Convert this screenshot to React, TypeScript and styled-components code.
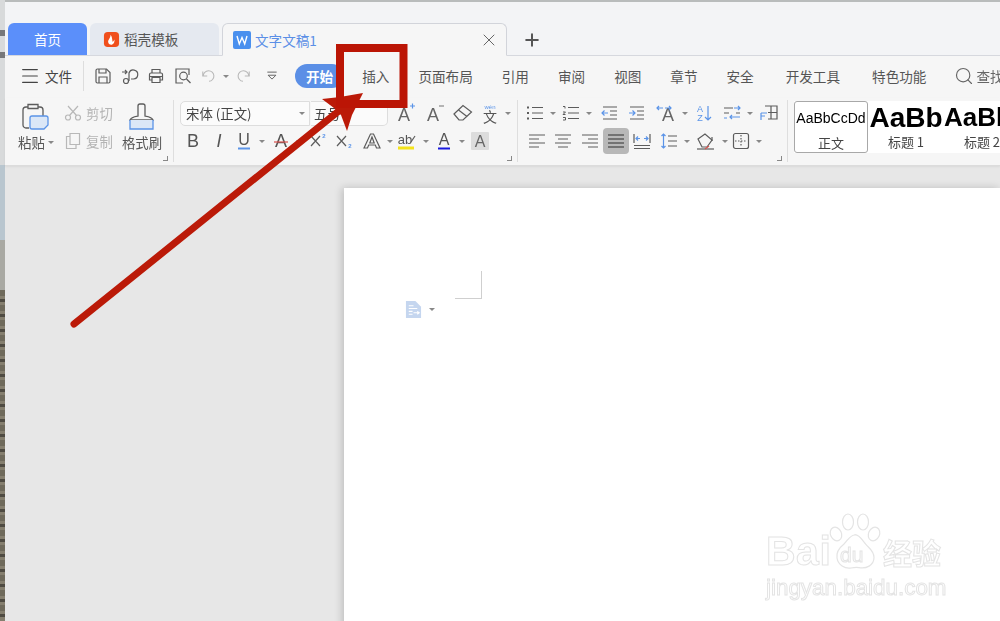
import React from "react";
import styled, { createGlobalStyle } from "styled-components";
import { Menu, Search, X, Plus } from "lucide-react";

const GlobalStyle = createGlobalStyle`
  html, body {
    margin: 0;
    padding: 0;
    background: #e7e7e7;
    overflow: hidden;
  }
  * { box-sizing: border-box; }
`;

const Root = styled.div`
  position: relative;
  width: 1000px;
  height: 621px;
  overflow: hidden;
  display: flex;
  font-family: "Noto Sans CJK SC", "Liberation Sans", sans-serif;
  color: #555;
  filter: blur(0.35px);
`;

// the bit of desktop wallpaper left of the window, rocks at the bottom
const rockTones = ["#6f6a5c", "#a39d8e", "#4f4b42", "#bdb6a8", "#857f6f", "#d0cabd", "#5d594e", "#958f80", "#77786f", "#aaa69a"];
const rockStops = Array.from({ length: 110 }, (_, i) => {
  const tone = rockTones[(i * i * 7 + i * 3) % rockTones.length];
  const start = 290 + i * 3;
  return `${tone} ${start}px ${start + 3}px`;
}).join(", ");

const DesktopStrip = styled.div`
  width: 5px;
  flex: none;
  background: linear-gradient(180deg, #d8dadb 0 30px, #77787a 30px 36px, #d8dadb 36px 52px, #77787a 52px 58px, #d8dadb 58px 165px, #b9c6cf 165px 240px, #a9a9a3 240px 290px, ${rockStops});
`;

const Win = styled.div`
  flex: 1;
  display: flex;
  flex-direction: column;
  min-width: 0;
  border-top: 2px solid #b9bcbc;
`;

const TitleBar = styled.div`
  height: 54px;
  flex: none;
  display: flex;
  align-items: flex-end;
  gap: 3px;
  padding-left: 3px;
  background: #f3f4f6;
  border-bottom: 1px solid #d6d8de;
`;

const Tab = styled.div<{ $w: number; $bg: string; $color: string; $active?: boolean }>`
  width: ${(p) => p.$w}px;
  height: ${(p) => (p.$active ? 33 : 32)}px;
  margin-bottom: ${(p) => (p.$active ? -1 : 0)}px;
  display: flex;
  align-items: center;
  gap: 4px;
  border-radius: 6px 6px 0 0;
  background: ${(p) => p.$bg};
  color: ${(p) => p.$color};
  font-size: 13.6px;
  border: ${(p) => (p.$active ? "1px solid #d2d4da" : "none")};
  border-bottom: ${(p) => (p.$active ? "1px solid #f6f6f6" : "none")};
  padding-left: ${(p) => (p.$active ? 10 : 13)}px;
`;

const HomeLabel = styled.span`
  width: 100%;
  text-align: center;
  padding-right: 13px;
`;

const Grow = styled.span`
  flex: 1;
`;

const CloseBtn = styled.span`
  display: flex;
  color: #666;
  margin-right: 7px;
`;

const AddTab = styled.div`
  display: flex;
  margin: 0 0 5px 12px;
  color: #555;
`;

const MenuRow = styled.div`
  height: 42px;
  flex: none;
  display: flex;
  align-items: center;
  padding-bottom: 2px;
  background: #f6f6f6;
  font-size: 13.6px;
`;

const Hamburger = styled.div`
  display: flex;
  flex: none;
  align-items: center;
  gap: 4px;
  padding-left: 14px;
  width: 78px;
  color: #444;
`;

const QuickBar = styled.div`
  display: flex;
  flex: none;
  align-items: center;
  width: 212px;
  height: 30px;
  border-left: 1px solid #ddd;
  padding-left: 5px;
`;

const MenuTabs = styled.div`
  display: flex;
  flex: none;
  align-items: center;
  gap: 7px;
`;

const MenuTab = styled.div<{ $active?: boolean; $far?: boolean }>`
  padding: 0 11px;
  height: 24px;
  line-height: 24px;
  white-space: nowrap;
  font-size: 13.6px;
  border-radius: 12px;
  margin-left: ${(p) => (p.$far ? 3 : 0)}px;
  background: ${(p) => (p.$active ? "#5b8fe6" : "transparent")};
  color: ${(p) => (p.$active ? "#fff" : "#555")};
  font-weight: ${(p) => (p.$active ? 600 : 400)};
`;

const Finder = styled.div`
  display: flex;
  flex: none;
  align-items: center;
  gap: 2px;
  margin-left: 17px;
  white-space: nowrap;
  font-size: 13.6px;
  color: #666;
`;

const Ribbon = styled.div`
  height: 68px;
  flex: none;
  display: flex;
  background: #f6f6f6;
  border-bottom: 1px solid #dcdcdc;
  box-shadow: 0 1px 2px rgba(0, 0, 0, 0.06);
  position: relative;
`;

const Group = styled.div<{ $w: number; $pad: number }>`
  position: relative;
  flex: none;
  width: ${(p) => p.$w}px;
  padding-left: ${(p) => p.$pad}px;
  margin: 2px 0 3px;
  border-right: 1px solid #dedede;
`;

const Launcher = styled.span`
  position: absolute;
  right: 5px;
  bottom: 1px;
  width: 5px;
  height: 5px;
  border-right: 1px solid #888;
  border-bottom: 1px solid #888;
`;

const ClipGrid = styled.div`
  display: flex;
  padding-left: 8px;
`;

const BigTool = styled.div<{ $w: number }>`
  width: ${(p) => p.$w}px;
  flex: none;
  display: flex;
  flex-direction: column;
  align-items: center;
  font-size: 13.4px;
  color: #555;
  white-space: nowrap;
  padding-top: 3px;
  gap: 1px;
`;

const BigLabel = styled.div`
  display: flex;
  align-items: center;
  gap: 3px;
  height: 20px;
`;

const SmallTools = styled.div`
  width: 57px;
  flex: none;
  margin-left: 5px;
  display: flex;
  flex-direction: column;
  gap: 8px;
  padding-top: 3px;
`;

const SmallTool = styled.div`
  display: flex;
  align-items: center;
  gap: 4px;
  height: 20px;
  font-size: 13.4px;
  color: #b4b4b4;
`;

const ToolRow = styled.div<{ $top?: number }>`
  display: flex;
  align-items: center;
  height: 26px;
  margin-top: ${(p) => p.$top ?? 0}px;
`;

const Tool = styled.div<{ $w: number; $on?: boolean }>`
  width: ${(p) => p.$w}px;
  height: 26px;
  flex: none;
  display: flex;
  align-items: center;
  justify-content: center;
  gap: 6px;
  border-radius: 4px;
  background: ${(p) => (p.$on ? "#b8b8b8" : "transparent")};
`;

const Caret = styled.span`
  width: 0;
  height: 0;
  flex: none;
  border-left: 3px solid transparent;
  border-right: 3px solid transparent;
  border-top: 3px solid #888;
`;

const FontBox = styled.div<{ $w: number; $left?: boolean }>`
  width: ${(p) => p.$w}px;
  height: 25px;
  flex: none;
  display: flex;
  align-items: center;
  justify-content: space-between;
  padding: 0 4px 0 ${(p) => (p.$left ? 5 : 3)}px;
  font-size: 13.4px;
  color: #444;
  background: #fbfbfb;
  border: 1px solid #dddddd;
  border-radius: ${(p) => (p.$left ? "5px 0 0 5px" : "0 5px 5px 0")};
  border-left-width: ${(p) => (p.$left ? 1 : 0)}px;
  margin-right: ${(p) => (p.$left ? 1 : 0)}px;
`;

const Gallery = styled.div`
  display: flex;
  flex: none;
  height: 52px;
  margin: 3px 0 0 6px;
  background: #fff;
  width: 206px;
  overflow: hidden;
`;

const StyleCard = styled.div<{ $w: number; $on?: boolean }>`
  width: ${(p) => p.$w}px;
  flex: none;
  display: flex;
  flex-direction: column;
  align-items: center;
  justify-content: space-between;
  overflow: ${(p) => (p.$on ? "hidden" : "visible")};
  border: ${(p) => (p.$on ? "1.5px solid #a8a8a8" : "none")};
  border-radius: 3px;
  padding: ${(p) => (p.$on ? "0 0 2px" : "0 0 3px")};
  white-space: nowrap;
`;

const Sample = styled.div<{ $size: number; $bold?: boolean; $start?: boolean }>`
  height: 33px;
  line-height: 33px;
  font-family: "Liberation Sans", sans-serif;
  font-size: ${(p) => p.$size}px;
  font-weight: ${(p) => (p.$bold ? 700 : 400)};
  color: #000;
  align-self: ${(p) => (p.$start ? "flex-start" : "center")};
`;

const StyleName = styled.div`
  font-size: 13px;
  line-height: 16px;
  color: #444;
`;

const Canvas = styled.div`
  flex: 1;
  background: #e7e7e7;
  padding: 22px 0 0 339px;
  min-height: 0;
`;

const Sheet = styled.div`
  height: 500px;
  background: #fff;
  box-shadow: -2px 0 8px rgba(0, 0, 0, 0.18);
  padding: 83px 0 0 61px;
`;

const MarginMark = styled.div`
  width: 27px;
  height: 28px;
  margin-left: 50px;
  border-right: 1px solid #cfcfcf;
  border-bottom: 1px solid #cfcfcf;
`;

const PasteMark = styled.div`
  display: flex;
  align-items: center;
  gap: 7px;
  margin-top: 2px;
`;

const Watermark = styled.div`
  position: absolute;
  left: 766px;
  top: 513px;
  width: 190px;
  color: #fff;
  -webkit-text-stroke: 1px #e4e4e4;
  font-family: "Liberation Sans", sans-serif;
`;

const MarkLine = styled.div`
  display: flex;
  align-items: flex-end;
  height: 58px;
`;

const MarkBai = styled.span`
  font-size: 41px;
  line-height: 40px;
  font-weight: 700;
  letter-spacing: 0.5px;
  flex: none;
  width: 61px;
`;

const MarkPaw = styled.div`
  position: relative;
  width: 56px;
  height: 58px;
  flex: none;
`;

const MarkDu = styled.span`
  position: absolute;
  left: 13px;
  bottom: 6px;
  font-size: 21px;
  line-height: 21px;
  color: #fff;
`;

const MarkCn = styled.span`
  font-family: "Noto Sans CJK SC", sans-serif;
  font-size: 29px;
  line-height: 38px;
  font-weight: 700;
  flex: none;
`;

const MarkUrl = styled.div`
  font-size: 22.4px;
  line-height: 26px;
  margin-top: 4px;
  white-space: nowrap;
`;

const Annotation = styled.svg`
  position: absolute;
  inset: 0;
  width: 1000px;
  height: 621px;
  pointer-events: none;
`;

const G = styled.svg<{ $s?: number }>`
  width: ${(p) => p.$s ?? 18}px;
  height: ${(p) => p.$s ?? 18}px;
  flex: none;
  fill: none;
  stroke: #5c5c5c;
  stroke-width: 1.2;
  display: block;
  overflow: visible;
`;

const Faded = styled(G)`
  stroke: #b8b8b8;
`;

const Txt = ({ x, y, s, c, b, i, children }: { x: number; y: number; s: number; c?: string; b?: boolean; i?: boolean; children: React.ReactNode }) => (
  <text x={x} y={y} fontSize={s} fill={c ?? "#555"} stroke="none" fontFamily="Liberation Sans, Noto Sans CJK SC, sans-serif" fontWeight={b ? 700 : 400} fontStyle={i ? "italic" : "normal"} textAnchor="middle">
    {children}
  </text>
);

const BLUE = "#5b94e8";

const SaveIcon = () => (
  <G viewBox="0 0 18 18"><path d="M2 3.5A1.5 1.5 0 0 1 3.5 2h9L16 5.500V14.500A1.500 1.500 0 0 1 14.500 16h-11A1.500 1.500 0 0 1 2 14.500Z" /><path d="M5 2v4h7V2M5 16v-6h8v6" /></G>
);
const ShareIcon = () => (
  <G viewBox="0 0 18 18"><path d="M1 5h5M4 3l2 2-2 2" /><path d="M8 14V6a4.500 4.500 0 1 1 4.500 6H10" /><circle cx="5" cy="14" r="2.500" /></G>
);
const PrintIcon = () => (
  <G viewBox="0 0 18 18"><path d="M5 6V2.500h8V6M5 13H2.500V7.500A1.500 1.500 0 0 1 4 6h10a1.500 1.500 0 0 1 1.500 1.500V13H13" /><path d="M5 10.500h8V15.500H5ZM2.500 9.500h13" /></G>
);
const PreviewIcon = () => (
  <G viewBox="0 0 18 18"><path d="M15 8V2H2v14h7" /><circle cx="9.500" cy="9" r="3.800" /><path d="M12.500 12l4 4" /></G>
);
const UndoIcon = ({ flip }: { flip?: boolean }) => (
  <Faded viewBox="0 0 18 18" $s={16} style={flip ? { transform: "scaleX(-1)" } : undefined}>
    <path d="M2 4v5h5" /><path d="M2.500 9A6 6 0 1 1 9 15" />
  </Faded>
);
const MoreIcon = () => (
  <G viewBox="0 0 18 18" $s={14}><path d="M3 4h12M4 8l5 5 5-5z" /></G>
);

const PasteIcon = () => (
  <G viewBox="0 0 28 28" $s={28}>
    <path d="M7 25H4A3 3 0 0 1 1 22V7A3 3 0 0 1 4 4h14a3 3 0 0 1 3 3v6" strokeWidth={1.300} />
    <path d="M6 1.500h10v4H6Z" strokeWidth={1.300} fill="#f6f6f6" />
    <path d="M10 13h14a2 2 0 0 1 2 2v7l-4 4H10a2 2 0 0 1-2-2v-9a2 2 0 0 1 2-2Z" fill="#dbe7f7" stroke={BLUE} strokeWidth={1.300} />
  </G>
);
const BrushIcon = () => (
  <G viewBox="0 0 28 28" $s={28}>
    <path d="M10 13V3a2 2 0 0 1 2-2h3a2 2 0 0 1 2 2v10c3 .5 7 1 8 4H2c1-3 5-3.500 8-4Z" strokeWidth={1.300} />
    <path d="M2 17h23v9H2Z" fill="#dbe7f7" stroke="none" />
    <path d="M2 17v9h23v-9" stroke={BLUE} strokeWidth={1.300} />
  </G>
);
const CutIcon = () => (
  <Faded viewBox="0 0 18 18"><circle cx="4" cy="13.500" r="2.500" /><circle cx="14" cy="13.500" r="2.500" /><path d="M5.500 11.500L14 2M12.500 11.500L4 2" /></Faded>
);
const CopyIcon = () => (
  <Faded viewBox="0 0 18 18"><path d="M6 1.500h9.500v11H6Z" /><path d="M6 4.500H2.500v12h9.500v-4" /></Faded>
);

const Letter = ({ t, c, b, i, line, strike }: { t: string; c?: string; b?: boolean; i?: boolean; line?: string; strike?: string }) => (
  <G viewBox="0 0 18 18">
    <Txt x={9} y={line ? 13 : 15} s={line ? 16 : 18} c={c} b={b} i={i}>{t}</Txt>
    {line && <path d="M3 16.500h12" stroke={line} strokeWidth={2} />}
    {strike && <path d="M2 10h14" stroke={strike} strokeWidth={1.200} />}
  </G>
);
const Grow2 = ({ up }: { up?: boolean }) => (
  <G viewBox="0 0 20 20" $s={20}>
    <Txt x={9} y={18} s={18} c="#666">A</Txt>
    {up ? <path d="M15 3h5M17.500 0.500v5" stroke={BLUE} /> : <path d="M15 3h5" stroke="#888" />}
  </G>
);
const EraserIcon = () => (
  <G viewBox="0 0 20 20" $s={20}><path d="M1 11L10 2.500 18.500 9 10 17H6Z" /><path d="M5.500 7L14 13.500" /></G>
);
const PinyinIcon = () => (
  <G viewBox="0 0 18 18"><Txt x={9} y={5} s={6} c={BLUE}>wén</Txt><Txt x={9} y={18} s={14} c="#555">文</Txt></G>
);
const SuperIcon = ({ low }: { low?: boolean }) => (
  <G viewBox="0 0 18 18">
    <path d="M2 4l9 10M11 4l-9 10" />
    <Txt x={15} y={low ? 16 : 6} s={6} c={BLUE} b>2</Txt>
  </G>
);
const OutlineA = () => (
  <G viewBox="0 0 18 18"><path d="M1 16L7.500 2h3L17 16h-3.500l-1.200-3H5.700l-1.200 3Z" /><path d="M9 5l-2.200 6h4.400Z" /></G>
);
const HighlightIcon = () => (
  <G viewBox="0 0 20 20" $s={20}>
    <Txt x={8} y={13} s={13} c="#555">ab</Txt>
    <path d="M14 11l4-6" />
    <path d="M1 17h16" stroke="#f4e31b" strokeWidth={3} />
  </G>
);
const ShadeA = () => (
  <G viewBox="0 0 18 18"><rect x="0" y="0" width="18" height="18" fill="#dcdcdc" stroke="none" rx="1" /><Txt x={9} y={15} s={16} c="#666">A</Txt></G>
);

const ListIcon = ({ num }: { num?: boolean }) => (
  <G viewBox="0 0 18 18">
    <path d="M6 3.500h11M6 9h11M6 14.500h11" />
    <path d={num ? "M1 2.500h2v2M1 8h2.500L1 10.500h2.500M1 13.500h2.500v2.500H1" : "M1 3.500h2M1 9h2M1 14.500h2"} strokeWidth={num ? 1 : 2} />
  </G>
);
const IndentIcon = ({ rev }: { rev?: boolean }) => (
  <G viewBox="0 0 18 18">
    <path d="M2 3h14M9 7h7M9 11h7M2 15h14" />
    <path d={rev ? "M7 9H1M3.500 6.500L1 9l2.500 2.500" : "M1 9h6M4.500 6.500L7 9l-2.500 2.500"} stroke={BLUE} />
  </G>
);
const DirIcon = () => (
  <G viewBox="0 0 20 20" $s={20}>
    <Txt x={12} y={18} s={18} c="#666">A</Txt>
    <path d="M1 5h6M3 3L1 5l2 2M9 5h6M13 3l2 2-2 2" stroke={BLUE} />
  </G>
);
const SortIcon = () => (
  <G viewBox="0 0 18 18">
    <Txt x={5} y={8} s={9} c={BLUE}>A</Txt>
    <Txt x={5} y={17} s={9} c={BLUE}>Z</Txt>
    <path d="M13 2v14M10 13l3 3 3-3" stroke={BLUE} />
  </G>
);
const SwapIcon = () => (
  <G viewBox="0 0 18 18">
    <path d="M1 4h9M1 9h5M13 9h4" />
    <path d="M11 4h6M15 2l2 2-2 2M17 13H7M9 11l-2 2 2 2M1 14h3" stroke={BLUE} />
  </G>
);
const TableSplit = () => (
  <G viewBox="0 0 18 18"><path d="M5 2h12v13H8M11 2v13M8 8.500h9" /><path d="M1 9h6M1 9v7M1 12h4" stroke={BLUE} /></G>
);
const AlignIcon = ({ kind }: { kind: "l" | "c" | "r" | "j" }) => {
  const paths = {
    l: "M1 3h16M1 7h10M1 11h16M1 15h10",
    c: "M1 3h16M4 7h10M1 11h16M4 15h10",
    r: "M1 3h16M7 7h10M1 11h16M7 15h10",
    j: "M1 3h16M1 7h16M1 11h16M1 15h16",
  };
  return <G viewBox="0 0 18 18"><path d={paths[kind]} strokeWidth={kind === "j" ? 1.5 : 1.2} /></G>;
};
const DistIcon = () => (
  <G viewBox="0 0 18 18">
    <path d="M1 2v9M17 2v9M1 13.500h16M1 16.500h16" />
    <path d="M3 6.500h4M5 4.500l-2 2 2 2M11 6.500h4M13 4.500l2 2-2 2" stroke={BLUE} />
  </G>
);
const SpacingIcon = () => (
  <G viewBox="0 0 18 18">
    <path d="M8 4h9M8 9h9M8 14h9" />
    <path d="M3.500 2v14M1.500 4l2-2 2 2M1.500 14l2 2 2-2" stroke={BLUE} />
  </G>
);
const FillIcon = () => (
  <G viewBox="0 0 20 20" $s={20}>
    <path d="M2 8l7-5 7 6-5 7H6Z" />
    <path d="M16 6v4" />
    <path d="M1 18h17" />
    <path d="M9 18l4-3" stroke="#d9534f" />
  </G>
);
const BorderIcon = () => (
  <G viewBox="0 0 18 18"><rect x="1.500" y="1.500" width="15" height="15" rx="2" /><path d="M9 3v12M3 9h12" strokeDasharray="1.500 1.500" /></G>
);

const FlameLogo = () => (
  <G viewBox="0 0 16 18" $s={17}>
    <rect x="0" y="1" width="16" height="16" rx="4" fill="#f04f1c" stroke="none" />
    <path d="M7 4C7 8 4 9 4.500 12c.4 2 2 2.600 3 2.600 2.500 0 4-2.600 3.600-5.600-.6 1.400-1.200 2-2 2.300C8.800 9 8.600 6 7 4Z" fill="#fff" stroke="none" />
  </G>
);
const WLogo = () => (
  <G viewBox="0 0 18 18" $s={18}>
    <rect x="0" y="0" width="18" height="18" rx="2" fill="#4a90ee" stroke="none" />
    <path d="M4 5l2.300 8L9 6.500l2.700 6.500L14 5" stroke="#fff" strokeWidth={1.400} />
  </G>
);
const DocMark = () => (
  <G viewBox="0 0 16 18" $s={17}>
    <path d="M0 0h10l6 6v12H0Z" fill="#c5d6ef" stroke="none" />
    <path d="M3 5h5M3 8h9M3 11h4M3 14h4M8 12.500h6M12 11l2 1.500-2 1.500" stroke="#fff" />
  </G>
);

const tabNames = ["插入", "页面布局", "引用", "审阅", "视图", "章节", "安全"];

export default function App() {
  return (
    <Root>
      <GlobalStyle />
      <DesktopStrip />
      <Win>
        <TitleBar>
          <Tab $w={79} $bg="#5b8ffa" $color="#fff"><HomeLabel>首页</HomeLabel></Tab>
          <Tab $w={129} $bg="#e5e9f0" $color="#555"><FlameLogo />稻壳模板</Tab>
          <Tab $w={285} $bg="#f6f6f6" $color="#5b8fe6" $active>
            <WLogo />文字文稿1<Grow />
            <CloseBtn><X size={20} strokeWidth={1.2} /></CloseBtn>
          </Tab>
          <AddTab><Plus size={20} strokeWidth={2.400} /></AddTab>
        </TitleBar>

        <MenuRow>
          <Hamburger><Menu size={22} strokeWidth={1.3} />文件</Hamburger>
          <QuickBar>
            <Tool $w={27}><SaveIcon /></Tool>
            <Tool $w={27}><ShareIcon /></Tool>
            <Tool $w={25}><PrintIcon /></Tool>
            <Tool $w={29}><PreviewIcon /></Tool>
            <Tool $w={36}><UndoIcon /><Caret /></Tool>
            <Tool $w={20}><UndoIcon flip /></Tool>
            <Tool $w={38}><MoreIcon /></Tool>
          </QuickBar>
          <MenuTabs>
            <MenuTab $active>开始</MenuTab>
            {tabNames.map((name) => (
              <MenuTab key={name}>{name}</MenuTab>
            ))}
            <MenuTab $far>开发工具</MenuTab>
            <MenuTab $far>特色功能</MenuTab>
          </MenuTabs>
          <Finder><Search size={20} strokeWidth={1.4} />查找</Finder>
        </MenuRow>

        <Ribbon>
          <Group $w={169} $pad={0}>
            <ClipGrid>
              <BigTool $w={46}>
                <PasteIcon />
                <BigLabel>粘贴<Caret /></BigLabel>
              </BigTool>
              <SmallTools>
                <SmallTool><CutIcon />剪切</SmallTool>
                <SmallTool><CopyIcon />复制</SmallTool>
              </SmallTools>
              <BigTool $w={42}>
                <BrushIcon />
                <BigLabel>格式刷</BigLabel>
              </BigTool>
            </ClipGrid>
            <Launcher />
          </Group>

          <Group $w={344} $pad={6}>
            <ToolRow $top={0}>
              <FontBox $w={130} $left>宋体 (正文)<Caret /></FontBox>
              <FontBox $w={77}>五号</FontBox>
              <Tool $w={34}><Grow2 up /></Tool>
              <Tool $w={24}><Grow2 /></Tool>
              <Tool $w={34}><EraserIcon /></Tool>
              <Tool $w={32}><PinyinIcon /><Caret /></Tool>
            </ToolRow>
            <ToolRow $top={2}>
              <Tool $w={25}><Letter t="B" /></Tool>
              <Tool $w={27}><Letter t="I" i /></Tool>
              <Tool $w={36}><Letter t="U" line={BLUE} /><Caret /></Tool>
              <Tool $w={38}><Letter t="A" strike="#d9534f" /><Caret /></Tool>
              <Tool $w={24}><SuperIcon /></Tool>
              <Tool $w={28}><SuperIcon low /></Tool>
              <Tool $w={40}><OutlineA /><Caret /></Tool>
              <Tool $w={30}><HighlightIcon /><Caret /></Tool>
              <Tool $w={43}><Letter t="A" line="#1a1ae0" /><Caret /></Tool>
              <Tool $w={18}><ShadeA /></Tool>
            </ToolRow>
            <Launcher />
          </Group>

          <Group $w={270} $pad={7}>
            <ToolRow $top={0}>
              <Tool $w={32}><ListIcon /><Caret /></Tool>
              <Tool $w={40}><ListIcon num /><Caret /></Tool>
              <Tool $w={26}><IndentIcon rev /></Tool>
              <Tool $w={28}><IndentIcon /></Tool>
              <Tool $w={42}><DirIcon /><Caret /></Tool>
              <Tool $w={22}><SortIcon /></Tool>
              <Tool $w={46}><SwapIcon /><Caret /></Tool>
              <Tool $w={16}><TableSplit /></Tool>
            </ToolRow>
            <ToolRow $top={2}>
              <Tool $w={24}><AlignIcon kind="l" /></Tool>
              <Tool $w={28}><AlignIcon kind="c" /></Tool>
              <Tool $w={26}><AlignIcon kind="r" /></Tool>
              <Tool $w={26} $on><AlignIcon kind="j" /></Tool>
              <Tool $w={26}><DistIcon /></Tool>
              <Tool $w={40}><SpacingIcon /><Caret /></Tool>
              <Tool $w={33}><FillIcon /><Caret /></Tool>
              <Tool $w={38}><BorderIcon /><Caret /></Tool>
            </ToolRow>
            <Launcher />
          </Group>

          <Gallery>
            <StyleCard $w={74} $on>
              <Sample $size={14}>AaBbCcDd</Sample>
              <StyleName>正文</StyleName>
            </StyleCard>
            <StyleCard $w={76}>
              <Sample $size={28} $bold>AaBb</Sample>
              <StyleName>标题 1</StyleName>
            </StyleCard>
            <StyleCard $w={76}>
              <Sample $size={26} $bold $start>AaBb</Sample>
              <StyleName>标题 2</StyleName>
            </StyleCard>
          </Gallery>
        </Ribbon>

        <Canvas>
          <Sheet>
            <MarginMark />
            <PasteMark><DocMark /><Caret /></PasteMark>
          </Sheet>
        </Canvas>
      </Win>

      <Watermark>
        <MarkLine>
          <MarkBai>Bai</MarkBai>
          <MarkPaw>
            <svg width="56" height="58" viewBox="0 0 56 58" fill="#fff" stroke="#e4e4e4" strokeWidth="1.200">
              <ellipse cx="9" cy="21" rx="5.500" ry="7" transform="rotate(-25 9 21)" />
              <ellipse cx="21" cy="9" rx="5.500" ry="8" />
              <ellipse cx="36" cy="9" rx="5.500" ry="8" />
              <ellipse cx="47" cy="21" rx="5.500" ry="7" transform="rotate(25 47 21)" />
              <path d="M28 22c-5 0-7 5-11 9-5 4-8 8-7 14 1 7 8 11 14 10 3-.6 5-1 8-.4 7 1.400 15-2 15-10 0-6-4-9-7-12-4-4-7-11-12-11Z" />
            </svg>
            <MarkDu>du</MarkDu>
          </MarkPaw>
          <MarkCn>经验</MarkCn>
        </MarkLine>
        <MarkUrl>jingyan.baidu.com</MarkUrl>
      </Watermark>

      <Annotation viewBox="0 0 1000 621">
        <path d="M74 324L345 106" stroke="#bb1a08" strokeWidth={7} strokeLinecap="round" fill="none" />
        <path d="M322 99L340 97 363 93 352 115 347 131 341 115 334 108Z" fill="#bb1a08" />
        <rect x={340} y={48} width={63.500} height={56} fill="none" stroke="#bb1505" strokeWidth={8} />
      </Annotation>
    </Root>
  );
}
